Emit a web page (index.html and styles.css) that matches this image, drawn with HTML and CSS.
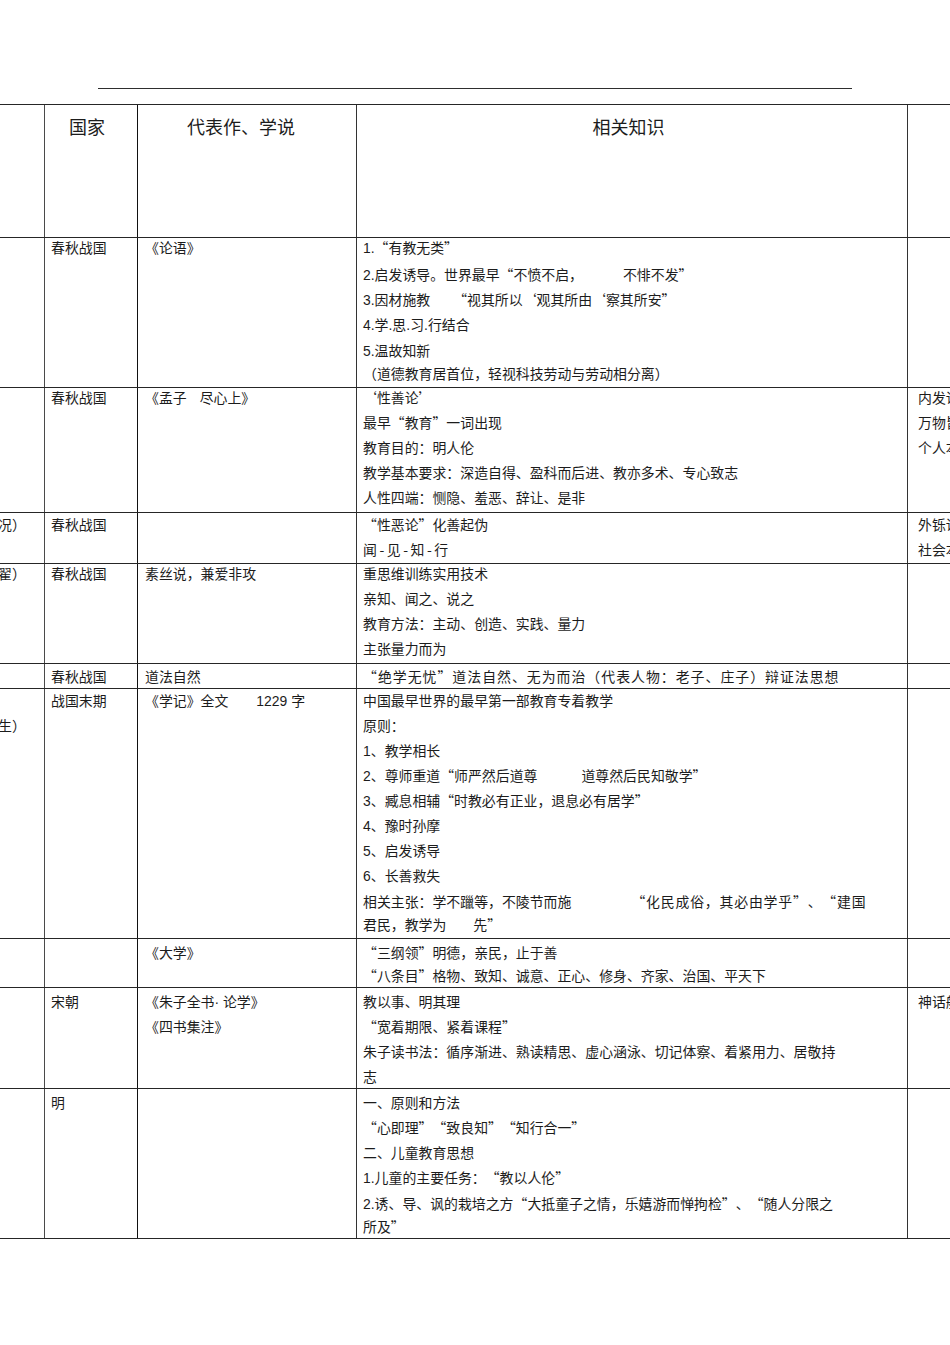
FILE: index.html
```html
<!DOCTYPE html>
<html lang="zh-CN">
<head>
<meta charset="utf-8">
<title>教育家</title>
<link rel="stylesheet" href="styles.css">
</head>
<body>
<div class="page">
  <div class="rule"></div>
  <div class="tbl">
    <div class="row head">
      <div class="c c0"></div>
      <div class="c c1 h1">国家</div>
      <div class="c c2 h2">代表作、学说</div>
      <div class="c c3 h3">相关知识</div>
      <div class="c c4"></div>
    </div>

    <div class="row r1">
      <div class="c c0"></div>
      <div class="c c1"><p>春秋战国</p></div>
      <div class="c c2"><p>《论语》</p></div>
      <div class="c c3">
        <p class="m8"><span class="n">1.</span>“有教无类”</p>
        <p><span class="n">2.</span>启发诱导。世界最早“不愤不启，<span class="g w40"></span>不悱不发”</p>
        <p><span class="n">3.</span>因材施教<span class="g w23"></span>“视其所以‘观其所由‘察其所安”</p>
        <p class="m7"><span class="n">4.</span>学<span class="n">.</span>思<span class="n">.</span>习<span class="n">.</span>行结合</p>
        <p class="tight"><span class="n">5.</span>温故知新</p>
        <p>（道德教育居首位，轻视科技劳动与劳动相分离）</p>
      </div>
      <div class="c c4"></div>
    </div>

    <div class="row r2">
      <div class="c c0"></div>
      <div class="c c1"><p>春秋战国</p></div>
      <div class="c c2"><p>《孟子<span class="g w13"></span>尽心上》</p></div>
      <div class="c c3">
        <p>‘性善论’</p>
        <p>最早“教育”一词出现</p>
        <p>教育目的：明人伦</p>
        <p>教学基本要求：深造自得、盈科而后进、教亦多术、专心致志</p>
        <p>人性四端：恻隐、羞恶、辞让、是非</p>
      </div>
      <div class="c c4">
        <p>内发论</p>
        <p>万物皆备</p>
        <p>个人本位</p>
      </div>
    </div>

    <div class="row r3">
      <div class="c c0"><p class="cut">况）</p></div>
      <div class="c c1"><p>春秋战国</p></div>
      <div class="c c2"></div>
      <div class="c c3">
        <p>“性恶论”化善起伪</p>
        <p>闻<span class="h">-</span>见<span class="h">-</span>知<span class="h">-</span>行</p>
      </div>
      <div class="c c4">
        <p>外铄论</p>
        <p>社会本位</p>
      </div>
    </div>

    <div class="row r4">
      <div class="c c0"><p class="cut">翟）</p></div>
      <div class="c c1"><p>春秋战国</p></div>
      <div class="c c2"><p>素丝说，兼爱非攻</p></div>
      <div class="c c3">
        <p>重思维训练实用技术</p>
        <p>亲知、闻之、说之</p>
        <p>教育方法：主动、创造、实践、量力</p>
        <p>主张量力而为</p>
      </div>
      <div class="c c4"></div>
    </div>

    <div class="row r5">
      <div class="c c0"></div>
      <div class="c c1"><p>春秋战国</p></div>
      <div class="c c2"><p>道法自然</p></div>
      <div class="c c3"><p class="wide">“绝学无忧”道法自然、无为而治（代表人物：老子、庄子）辩证法思想</p></div>
      <div class="c c4"></div>
    </div>

    <div class="row r6">
      <div class="c c0"><p>&nbsp;</p><p class="cut">生）</p></div>
      <div class="c c1"><p>战国末期</p></div>
      <div class="c c2"><p>《学记》全文<span class="g w28"></span><span class="n">1229 </span>字</p></div>
      <div class="c c3">
        <p>中国最早世界的最早第一部教育专着教学</p>
        <p>原则：</p>
        <p><span class="n">1</span>、教学相长</p>
        <p><span class="n">2</span>、尊师重道“师严然后道尊<span class="g w44"></span>道尊然后民知敬学”</p>
        <p><span class="n">3</span>、臧息相辅“时教必有正业，退息必有居学”</p>
        <p><span class="n">4</span>、豫时孙摩</p>
        <p><span class="n">5</span>、启发诱导</p>
        <p class="m7"><span class="n">6</span>、长善救失</p>
        <p class="tight">相关主张：学不躐等，不陵节而施<span class="g w60"></span><span class="sp">“化民成俗，其必由学乎”、“建国</span></p>
        <p>君民，教学为<span class="g w27"></span>先”</p>
      </div>
      <div class="c c4"></div>
    </div>

    <div class="row r7">
      <div class="c c0"></div>
      <div class="c c1"></div>
      <div class="c c2"><p>《大学》</p></div>
      <div class="c c3">
        <p class="tight">“三纲领”明德，亲民，止于善</p>
        <p>“八条目”格物、致知、诚意、正心、修身、齐家、治国、平天下</p>
      </div>
      <div class="c c4"></div>
    </div>

    <div class="row r8">
      <div class="c c0"></div>
      <div class="c c1"><p>宋朝</p></div>
      <div class="c c2">
        <p>《朱子全书<span class="n">· </span>论学》</p>
        <p>《四书集注》</p>
      </div>
      <div class="c c3">
        <p>教以事、明其理</p>
        <p>“宽着期限、紧着课程”</p>
        <p>朱子读书法：循序渐进、熟读精思、虚心涵泳、切记体察、着紧用力、居敬持</p>
        <p>志</p>
      </div>
      <div class="c c4"><p>神话般</p></div>
    </div>

    <div class="row r9">
      <div class="c c0"></div>
      <div class="c c1"><p>明</p></div>
      <div class="c c2"></div>
      <div class="c c3">
        <p>一、原则和方法</p>
        <p>“心即理”“致良知”“知行合一”</p>
        <p>二、儿童教育思想</p>
        <p class="m7"><span class="n">1.</span>儿童的主要任务：“教以人伦”</p>
        <p class="tight"><span class="n">2.</span>诱、导、讽的栽培之方“大抵童子之情，乐嬉游而惮拘检”、“随人分限之</p>
        <p>所及”</p>
      </div>
      <div class="c c4"></div>
    </div>
  </div>
</div>
</body>
</html>
```

FILE: styles.css
```css
html, body {
  margin: 0;
  padding: 0;
  background: #ffffff;
}

body {
  font-family: "Noto Sans CJK SC", sans-serif;
  font-size: 13.9px;
  color: #1c1c1c;
  text-spacing-trim: space-all;
}

.page {
  width: 950px;
  height: 1345px;
  overflow: hidden;
}

.rule {
  margin: 88px 0 0 98px;
  width: 754px;
  border-top: 1px solid #2e2e2e;
}

.tbl {
  margin-top: 15px;
  width: 968px;
  border-top: 1px solid #262626;
}

.row {
  display: grid;
  grid-template-columns: 45px 93px 219px 551px 60px;
  box-sizing: border-box;
  border-bottom: 1px solid #262626;
  overflow: hidden;
}

.c {
  box-sizing: border-box;
  border-right: 1px solid #333333;
  min-width: 0;
}

.c0 {
  overflow: hidden;
  border-right-color: #4a4a4a;
}

.c1 {
  padding-left: 6px;
  border-right-color: #111111;
}

.c2 {
  padding-left: 7px;
}

.c3 {
  padding-left: 6px;
}

.c4 {
  padding-left: 10px;
  border-right: none;
}

p {
  margin: 0 0 6px;
  height: 19px;
  line-height: 19px;
  white-space: nowrap;
}

p.tight {
  margin-bottom: 4px;
}

p.m7 {
  margin-bottom: 7px;
}

p.m8 {
  margin-bottom: 8px;
}

p:last-child {
  margin-bottom: 0;
}

p.wide {
  letter-spacing: 1px;
}

.sp {
  letter-spacing: 0.8px;
}

.cut {
  text-indent: -2px;
}

.n {
  font-family: "Liberation Sans", Arial, sans-serif;
}

.h {
  padding: 0 2.5px;
}

.g {
  display: inline-block;
}

.w13 { width: 13px; }
.w23 { width: 23px; }
.w27 { width: 27px; }
.w28 { width: 28px; }
.w40 { width: 40px; }
.w44 { width: 44px; }
.w60 { width: 60px; }

/* header */
.head {
  height: 133px;
}

.head .c {
  font-size: 18px;
  line-height: 24px;
  padding-top: 9px;
  text-align: center;
}

.head .h1 { padding-left: 0; padding-right: 8px; }
.head .h2 { padding-left: 0; padding-right: 12px; }
.head .h3 { padding-left: 0; padding-right: 7px; }

/* body rows */
.r1 { height: 150px; }
.r2 { height: 125px; }
.r3 { height: 51px; }
.r4 { height: 100px; }
.r5 { height: 25px; }
.r6 { height: 250px; }
.r7 { height: 49px; }
.r8 { height: 101px; }
.r9 { height: 150px; }

.r1 .c { padding-top: 0; }
.r2 .c { padding-top: 0; }
.r3 .c { padding-top: 2px; }
.r4 .c { padding-top: 0; }
.r5 .c { padding-top: 3px; }
.r6 .c { padding-top: 2px; }
.r7 .c { padding-top: 4px; }
.r8 .c { padding-top: 4px; }
.r9 .c { padding-top: 4px; }
```
